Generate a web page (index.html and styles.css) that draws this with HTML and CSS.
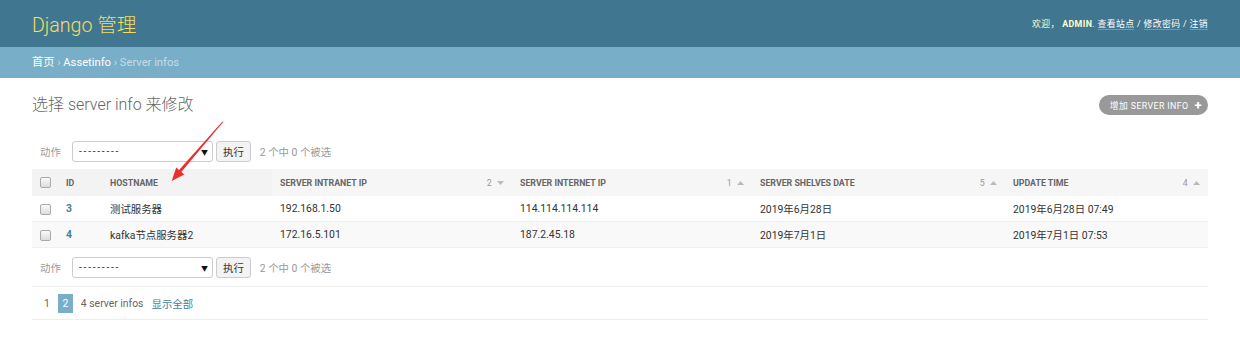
FILE: index.html
```html
<!DOCTYPE html>
<html lang="zh-CN">
  <head>
    <meta charset="UTF-8" />
    <title>选择 server info 来修改 | Django 站点管理员</title>
    <link rel="stylesheet" href="styles.css">
  </head>
  <body>
    <!-- 1. 상단영역 -->
    <div id="header">
      <div class="branding">Django 管理</div>
      <div class="user-tools">
        欢迎， <strong>admin</strong>.
        <a href="#">查看站点</a> /
        <a href="#">修改密码</a> /
        <a href="#">注销</a>
      </div>
    </div>
    <!-- 2. 경로표시 -->
    <div class="breadcrumbs">
      <a href="#">首页</a> › <a href="#">Assetinfo</a> › Server infos
    </div>
    <!-- 3. 메인영역 -->
    <div id="content">
      <div class="title-row">
        <h1>选择 server info 来修改</h1>
        <a href="#" class="addlink">增加 server info <span class="plus">+</span></a>
      </div>

      <div class="actions">
        <label>动作</label>
        <span class="select-box"><select><option>---------</option></select></span>
        <button type="button">执行</button>
        <span class="counter">2 个中 0 个被选</span>
      </div>

      <table class="result-list">
        <colgroup>
          <col class="w-check" />
          <col class="w-id" />
          <col class="w-host" />
          <col class="w-ip" />
          <col class="w-ip" />
          <col class="w-date" />
          <col class="w-time" />
        </colgroup>
        <thead>
          <tr>
            <th class="check"><input type="checkbox" /></th>
            <th>ID</th>
            <th>Hostname</th>
            <th class="sorted">Server intranet IP
              <span class="sort">2 <svg width="7" height="4" viewBox="0 0 7 4"><path d="M0 0h7L3.5 4z" /></svg></span>
            </th>
            <th class="sorted">Server internet IP
              <span class="sort">1 <svg width="7" height="4" viewBox="0 0 7 4"><path d="M0 4h7L3.5 0z" /></svg></span>
            </th>
            <th class="sorted">Server shelves date
              <span class="sort">5 <svg width="7" height="4" viewBox="0 0 7 4"><path d="M0 4h7L3.5 0z" /></svg></span>
            </th>
            <th class="sorted">Update time
              <span class="sort">4 <svg width="7" height="4" viewBox="0 0 7 4"><path d="M0 4h7L3.5 0z" /></svg></span>
            </th>
          </tr>
        </thead>
        <tbody>
          <tr>
            <td class="check"><input type="checkbox" /></td>
            <td><a href="#" class="id">3</a></td>
            <td>测试服务器</td>
            <td>192.168.1.50</td>
            <td>114.114.114.114</td>
            <td>2019年6月28日</td>
            <td>2019年6月28日 07:49</td>
          </tr>
          <tr class="row2">
            <td class="check"><input type="checkbox" /></td>
            <td><a href="#" class="id">4</a></td>
            <td>kafka节点服务器2</td>
            <td>172.16.5.101</td>
            <td>187.2.45.18</td>
            <td>2019年7月1日</td>
            <td>2019年7月1日 07:53</td>
          </tr>
        </tbody>
      </table>

      <div class="actions actions-bottom">
        <label>动作</label>
        <span class="select-box"><select><option>---------</option></select></span>
        <button type="button">执行</button>
        <span class="counter">2 个中 0 个被选</span>
      </div>

      <p class="paginator">
        <a href="#" class="page">1</a>
        <span class="this-page">2</span>
        <span>4 server infos</span>
        <a href="#" class="showall">显示全部</a>
      </p>
    </div>

    <!-- 빨간 화살표 표시 -->
    <svg class="mark" width="1240" height="357" viewBox="0 0 1240 357">
      <polygon points="222.4,121.4 223.2,122.1 181.3,171.9 184.3,174.4 171.7,180.9 176.2,167.4 179.1,169.9" />
    </svg>
  </body>
</html>
```

FILE: styles.css
```css
/* 기본 초기화 */
html,
body,
h1,
p {
  margin: 0;
  padding: 0;
}
body {
  position: relative;
  font-family: Roboto, "Noto Sans CJK SC", sans-serif;
  font-size: 10.4px;
  color: #333;
  background: #fff;
}
a {
  text-decoration: none;
}

/************* 1. 상단영역 *************/
#header {
  display: flex;
  justify-content: space-between;
  align-items: center;
  height: 47px;
  padding: 0 32px;
  background: #417690;
}
.branding {
  font-size: 19.6px;
  font-weight: 300;
  color: #f5dd5d;
}
.user-tools {
  font-size: 8.8px;
  letter-spacing: 0.4px;
  color: #ffc;
}
.user-tools strong {
  font-weight: 700;
  text-transform: uppercase;
}
.user-tools a {
  color: #fff;
  border-bottom: 1px solid rgba(255, 255, 255, 0.25);
}

/************* 2. 경로표시 *************/
.breadcrumbs {
  height: 31px;
  line-height: 31px;
  padding: 0 32px;
  font-size: 11.2px;
  color: #c4dce8;
  background: #79aec8;
}
.breadcrumbs a {
  color: #fff;
}

/************* 3. 메인영역 *************/
#content {
  padding: 16px 32px 0;
}
.title-row {
  display: flex;
  justify-content: space-between;
  align-items: center;
}
h1 {
  font-size: 16px;
  line-height: 22px;
  font-weight: 300;
  color: #666;
}
.addlink {
  display: flex;
  align-items: center;
  gap: 6px;
  height: 20px;
  padding: 0 6px 0 11px;
  border-radius: 12px;
  background: #999;
  color: #fff;
  font-size: 8.8px;
  letter-spacing: 0.4px;
  text-transform: uppercase;
}
.plus {
  font-size: 13px;
  font-weight: 700;
  line-height: 1;
}

/* 동작 박스 */
.actions {
  display: flex;
  align-items: center;
  height: 21px;
  margin-top: 17px;
  padding: 8px 8px 7px;
  color: #999;
}
.actions-bottom {
  margin-top: 0;
  padding: 9px 8px 8px;
}
.actions label {
  width: 32px;
}
/* 셀렉트 화살표 */
.select-box {
  position: relative;
  display: block;
  height: 21px;
}
.select-box::after {
  content: "▼";
  position: absolute;
  top: 6px;
  right: 5px;
  font-size: 7px;
  color: #111;
  pointer-events: none;
}
.actions select {
  appearance: none;
  box-sizing: border-box;
  width: 141px;
  height: 21px;
  padding: 0 6px;
  border: 1px solid #ccc;
  border-radius: 3px;
  background: #fff;
  font-family: Roboto, sans-serif;
  font-size: 10px;
  letter-spacing: 1.8px;
  color: #333;
}
.actions button {
  box-sizing: border-box;
  height: 21px;
  margin-left: 3px;
  padding: 0 6px;
  border: 1px solid #ccc;
  border-radius: 3px;
  background: #f3f3f3;
  font-family: Roboto, "Noto Sans CJK SC", sans-serif;
  font-size: 10.4px;
  color: #333;
}
.counter {
  margin-left: 9px;
}

/* 결과 테이블 */
.result-list {
  width: 1176px;
  table-layout: fixed;
  border-collapse: collapse;
}
.w-check { width: 26px; }
.w-id { width: 44px; }
.w-host { width: 170px; }
.w-ip { width: 240px; }
.w-date { width: 253px; }
.w-time { width: 203px; }

.result-list th {
  height: 27px;
  padding: 0 8px;
  text-align: left;
  font-size: 8.8px;
  font-weight: 700;
  text-transform: uppercase;
  color: #666;
  background: #f3f3f3;
  white-space: nowrap;
}
.result-list th.sorted {
  background: #f6f6f6;
}
.sort {
  float: right;
  font-weight: 400;
  color: #999;
}
.sort svg {
  margin-left: 3px;
  fill: #bbb;
  vertical-align: 1px;
}
.result-list td {
  height: 25px;
  padding: 0 8px;
  border-bottom: 1px solid #f0f0f0;
  color: #333;
  white-space: nowrap;
}
.result-list .row2 td {
  background: #f9f9f9;
}
.result-list .check {
  padding: 0;
  text-align: center;
}
/* 체크박스 */
.check input {
  appearance: none;
  box-sizing: border-box;
  width: 11px;
  height: 11px;
  margin: 0;
  border: 1px solid #aaa;
  border-radius: 2px;
  background: linear-gradient(#fafafa, #dcdcdc);
  vertical-align: middle;
}
.id {
  font-weight: 700;
  color: #447e9b;
}

/* 페이지 표시 */
.paginator {
  display: flex;
  align-items: center;
  gap: 8px;
  height: 32px;
  padding: 0 12px;
  border-top: 1px solid #eee;
  border-bottom: 1px solid #eee;
  font-size: 10.4px;
  color: #666;
}
.page {
  color: #666;
}
.this-page {
  width: 15px;
  height: 19px;
  line-height: 19px;
  text-align: center;
  color: #fff;
  background: #79aec8;
}
.showall {
  color: #447e9b;
}

/* 빨간 화살표 */
.mark {
  position: absolute;
  top: 0;
  left: 0;
  pointer-events: none;
}
.mark polygon {
  fill: #e8302c;
}
```
